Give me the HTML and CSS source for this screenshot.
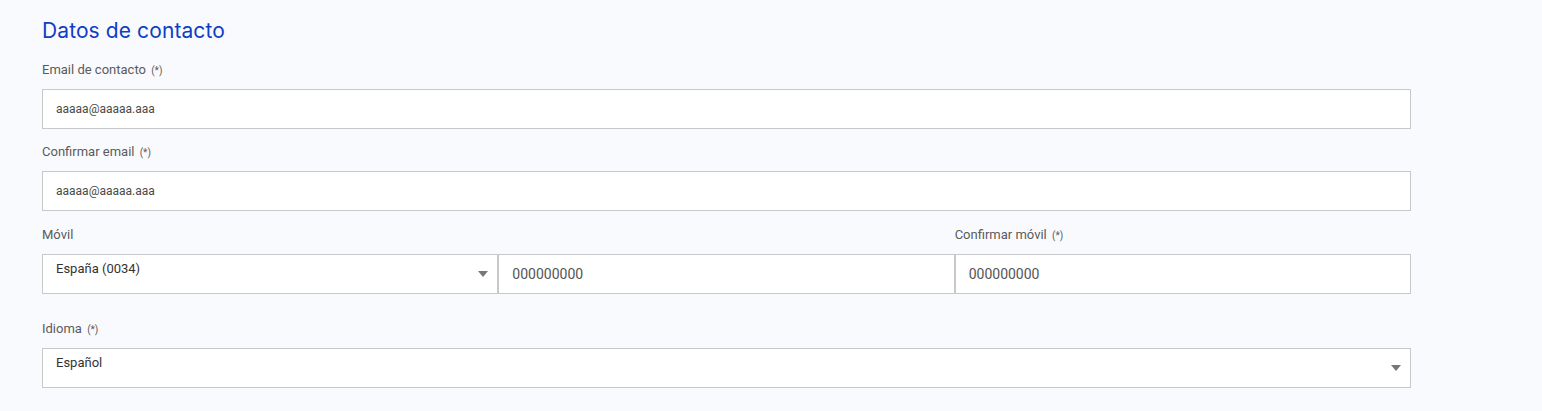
FILE: index.html
```html
<!DOCTYPE html>
<html lang="es">
<head>
<meta charset="utf-8">
<title>Datos de contacto</title>
<link rel="stylesheet" href="styles.css">
</head>
<body>
<main class="page">
  <h2 class="title">Datos de contacto</h2>

  <div class="field">
    <label class="label">Email de contacto <span class="req">(*)</span></label>
    <div class="box"><span class="val val-sm">aaaaa@aaaaa.aaa</span></div>
  </div>

  <div class="field">
    <label class="label">Confirmar email <span class="req">(*)</span></label>
    <div class="box"><span class="val val-sm">aaaaa@aaaaa.aaa</span></div>
  </div>

  <div class="phone-grid">
    <label class="label">Móvil</label>
    <span class="label"></span>
    <label class="label">Confirmar móvil <span class="req">(*)</span></label>

    <div class="box select">
      <span class="val val-sel">España (0034)</span>
      <svg class="caret" width="10" height="6" viewBox="0 0 10 6"><path d="M0 0H10L5 6Z" fill="#777"/></svg>
    </div>
    <div class="box"><span class="val val-num">000000000</span></div>
    <div class="box"><span class="val val-num">000000000</span></div>
  </div>

  <div class="field field-lang">
    <label class="label">Idioma <span class="req">(*)</span></label>
    <div class="box select">
      <span class="val val-sel">Español</span>
      <svg class="caret" width="10" height="6" viewBox="0 0 10 6"><path d="M0 0H10L5 6Z" fill="#777"/></svg>
    </div>
  </div>
</main>
</body>
</html>
```

FILE: styles.css
```css
* { box-sizing: border-box; }

html, body {
  margin: 0;
  padding: 0;
  background: #f9fafe;
}

body {
  font-family: "Roboto", "Liberation Sans", sans-serif;
  color: #5a5a5a;
}

.page {
  width: 1411px;
  padding: 19px 0 0 42px;
}

.title {
  margin: 0 0 18px 0;
  font-family: "Inter", "Noto Sans", sans-serif;
  font-weight: 400;
  font-size: 21px;
  letter-spacing: 0.1px;
  line-height: 24px;
  color: #0d3ec4;
}

.field {
  display: flex;
  flex-direction: column;
  margin-bottom: 14px;
}

.field-lang {
  margin-top: 26px;
}

.label {
  display: block;
  font-size: 13px;
  line-height: 18px;
  height: 18px;
  margin-bottom: 10px;
  color: #5b5b5b;
}

.req {
  font-size: 10px;
  margin-left: 2px;
}

.box {
  height: 40px;
  background: #fff;
  border: 1px solid #c8c8c8;
  display: flex;
  align-items: center;
  padding: 0 13px;
}

.val {
  color: #444;
}

.val-sm {
  font-size: 12px;
  color: #4a4a4a;
}

.val-num {
  font-size: 14px;
  color: #555;
}

.select {
  align-items: flex-start;
  justify-content: space-between;
  padding-top: 7px;
  padding-right: 9px;
}

.val-sel {
  font-size: 13px;
  color: #333;
  line-height: 14px;
}

.caret {
  align-self: center;
  margin-top: -7px;
}

.phone-grid {
  display: grid;
  grid-template-columns: repeat(3, 1fr);
  padding-top: 1px;
}
```
